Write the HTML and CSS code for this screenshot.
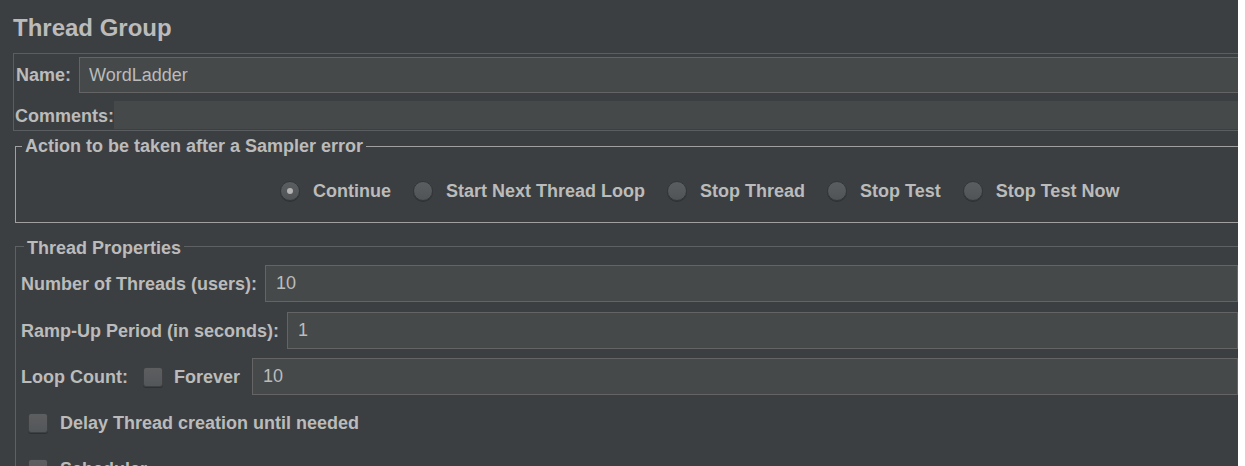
FILE: index.html
```html
<!DOCTYPE html>
<html>
<head>
<meta charset="utf-8">
<title>Thread Group</title>
<link rel="stylesheet" href="styles.css">
</head>
<body>
<div class="viewport">
  <div class="page">
    <h1 class="title">Thread Group</h1>

    <div class="name-panel">
      <div class="name-row">
        <span class="label name-label">Name:</span>
        <div class="field name-field">WordLadder</div>
      </div>
      <div class="comments-row">
        <span class="label">Comments:</span>
        <div class="textarea"></div>
      </div>
    </div>

    <fieldset class="group action-group">
      <legend class="group-title action-title">Action to be taken after a Sampler error</legend>
      <div class="radio-row">
        <div class="radio-item"><span class="radio selected"><span class="dot"></span></span><span class="label">Continue</span></div>
        <div class="radio-item"><span class="radio"></span><span class="label">Start Next Thread Loop</span></div>
        <div class="radio-item"><span class="radio"></span><span class="label">Stop Thread</span></div>
        <div class="radio-item"><span class="radio"></span><span class="label">Stop Test</span></div>
        <div class="radio-item"><span class="radio"></span><span class="label">Stop Test Now</span></div>
      </div>
    </fieldset>

    <fieldset class="group props-group">
      <legend class="group-title props-title">Thread Properties</legend>
      <div class="prop-row">
        <span class="label">Number of Threads (users):</span>
        <div class="field">10</div>
      </div>
      <div class="prop-row ramp-row">
        <span class="label">Ramp-Up Period (in seconds):</span>
        <div class="field">1</div>
      </div>
      <div class="prop-row">
        <span class="label">Loop Count:</span>
        <span class="checkbox loop-check"></span>
        <span class="label forever-label">Forever</span>
        <div class="field loop-field">10</div>
      </div>
      <div class="prop-row">
        <span class="checkbox row-check"></span>
        <span class="label check-label">Delay Thread creation until needed</span>
      </div>
      <div class="prop-row">
        <span class="checkbox row-check"></span>
        <span class="label check-label">Scheduler</span>
      </div>
    </fieldset>
  </div>
</div>
</body>
</html>
```

FILE: styles.css
```css
* {
  box-sizing: border-box;
}

html,
body {
  margin: 0;
  padding: 0;
  background: #ffffff;
}

body {
  font-family: "Liberation Sans", Arial, sans-serif;
  color: #bbbbbb;
}

.viewport {
  width: 1238px;
  height: 466px;
  overflow: hidden;
  background: #3c3f41;
}

.page {
  width: 1280px;
}

.title {
  margin: 0;
  padding: 14px 0 0 13px;
  font-size: 24px;
  line-height: 28px;
  font-weight: bold;
  color: #bbbbbb;
}

.label {
  font-size: 18px;
  line-height: 20px;
  font-weight: bold;
  color: #bbbbbb;
  white-space: nowrap;
  flex: none;
}

/* Name / comments panel */
.name-panel {
  margin: 11px 0 0 13px;
  border: 1px solid #5b5e60;
  border-right: none;
  padding: 3px 0 1px 1px;
}

.name-row {
  display: flex;
  align-items: center;
  height: 36px;
}

.name-label {
  margin-left: 1px;
}

.field {
  flex: 1;
  height: 37px;
  margin-left: 8px;
  margin-right: 42px;
  background: #45494a;
  border: 1px solid #646464;
  padding-left: 10px;
  font-size: 18px;
  line-height: 35px;
  color: #bbbbbb;
}

.name-field {
  height: 36px;
  line-height: 34px;
  padding-left: 9px;
  margin-right: 29px;
}

.comments-row {
  display: flex;
  align-items: center;
  height: 28px;
  margin-top: 8px;
}

.comments-row .label {
  padding-top: 2px;
}

.textarea {
  flex: 1;
  height: 28px;
  background: #45494a;
  margin-right: 29px;
}

/* Titled groups */
.group {
  margin: 0 0 0 15px;
  border: 1px solid #5e6163;
  border-right: none;
  padding: 0 0 0 5px;
  min-width: 0;
}

.group-title {
  padding: 0 3px;
  font-size: 18px;
  line-height: 20px;
  font-weight: bold;
  color: #bbbbbb;
}

.action-group {
  margin-top: 5px;
  border-color: #a0a0a0;
  padding-bottom: 21px;
}

.action-title {
  margin-left: 1px;
}

.props-group {
  margin-top: 11px;
  padding-top: 7px;
  padding-bottom: 20px;
}

.props-title {
  margin-left: 3px;
  padding-top: 4px;
}

/* Radio buttons */
.radio-row {
  display: flex;
  align-items: center;
  gap: 22px;
  height: 20px;
  margin-top: 25px;
  padding-left: 259px;
}

.radio-item {
  display: flex;
  align-items: center;
  gap: 13px;
}

.radio {
  width: 20px;
  height: 20px;
  border-radius: 50%;
  background: linear-gradient(#5b5e60, #515456);
  border: 1px solid #34363a;
  box-shadow: 0 1px 0 #2e3032;
  display: flex;
  align-items: center;
  justify-content: center;
  flex: none;
}

.dot {
  width: 6px;
  height: 6px;
  border-radius: 50%;
  background: #b4b4b4;
}

/* Property rows */
.prop-row {
  display: flex;
  align-items: center;
  height: 37px;
}

.prop-row + .prop-row {
  margin-top: 9px;
}

.prop-row.ramp-row {
  margin-top: 10px;
}

.checkbox {
  width: 20px;
  height: 20px;
  border-radius: 3px;
  background: linear-gradient(#5c5e60, #54575a);
  border: 1px solid #3e4042;
  box-shadow: 0 1px 0 #2e3032;
  flex: none;
}

.loop-check {
  margin-left: 15px;
}

.forever-label {
  margin-left: 11px;
}

.loop-field {
  margin-left: 12px;
}

.row-check {
  margin-left: 7px;
}

.check-label {
  margin-left: 12px;
}
```
